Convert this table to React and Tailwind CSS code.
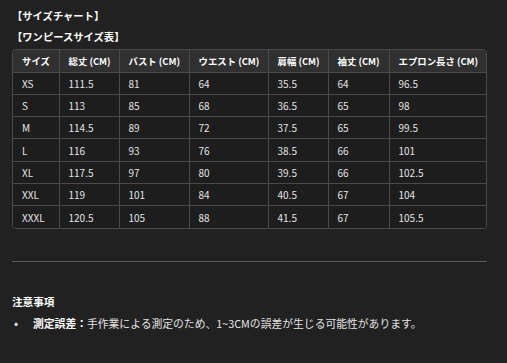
const headers = ["サイズ", "総丈 (CM)", "バスト (CM)", "ウエスト (CM)", "肩幅 (CM)", "袖丈 (CM)", "エプロン長さ (CM)"];

const rows = [
  ["XS", "111.5", "81", "64", "35.5", "64", "96.5"],
  ["S", "113", "85", "68", "36.5", "65", "98"],
  ["M", "114.5", "89", "72", "37.5", "65", "99.5"],
  ["L", "116", "93", "76", "38.5", "66", "101"],
  ["XL", "117.5", "97", "80", "39.5", "66", "102.5"],
  ["XXL", "119", "101", "84", "40.5", "67", "104"],
  ["XXXL", "120.5", "105", "88", "41.5", "67", "105.5"],
];

const widths = ["w-[46px]", "w-[60px]", "w-[70px]", "w-[79px]", "w-[60px]", "w-[61px]", "w-[99px]"];

export default function App() {
  return (
    <div
      className="min-h-[363px] w-full bg-[#212121] text-[#e3e3e3] text-[10px] px-3 pt-[6px]"
      style={{ fontFamily: '"Noto Sans CJK JP", "Noto Sans", sans-serif' }}
    >
      <h3 className="h-[20px] leading-[20px] font-bold text-white text-[10.3px]">【サイズチャート】</h3>
      <h3 className="h-[22px] leading-[22px] font-bold text-white text-[10.3px]">【ワンピースサイズ表】</h3>

      <div className="mt-[1px] w-[475px] border border-[#4a4a4a] rounded-[4px] overflow-hidden">
        <table className="w-full table-fixed border-collapse">
          <colgroup>
            {widths.map((w, i) => (
              <col key={i} className={w} />
            ))}
          </colgroup>
          <thead>
            <tr className="bg-[#303030] h-[22px]">
              {headers.map((h, i) => (
                <th
                  key={h}
                  className={`text-left font-bold text-white text-[9.4px] pl-[9px] whitespace-nowrap ${
                    i > 0 ? "border-l border-[#4a4a4a]" : ""
                  }`}
                >
                  {h}
                </th>
              ))}
            </tr>
          </thead>
          <tbody className="bg-[#1d1d1d]">
            {rows.map((r) => (
              <tr key={r[0]} className="h-[22.3px] border-t border-[#4a4a4a]">
                {r.map((c, i) => (
                  <td
                    key={i}
                    className={`pl-[9px] ${i > 0 ? "border-l border-[#4a4a4a]" : ""}`}
                  >
                    {c}
                  </td>
                ))}
              </tr>
            ))}
          </tbody>
        </table>
      </div>

      <hr className="mt-[32px] w-[475px] border-0 border-t border-[#5a5a5a]" />

      <h4 className="mt-[32px] font-bold text-white text-[10.6px] h-[16px] leading-[16px]">注意事項</h4>
      <ul className="mt-[5px] text-[10.8px]">
        <li className="flex items-center h-[16px]">
          <span className="w-[21px] pl-[2px] text-[12px]">•</span>
          <span>
            <strong className="font-bold text-white">測定誤差：</strong>
            手作業による測定のため、1~3CMの誤差が生じる可能性があります。
          </span>
        </li>
      </ul>
    </div>
  );
}
